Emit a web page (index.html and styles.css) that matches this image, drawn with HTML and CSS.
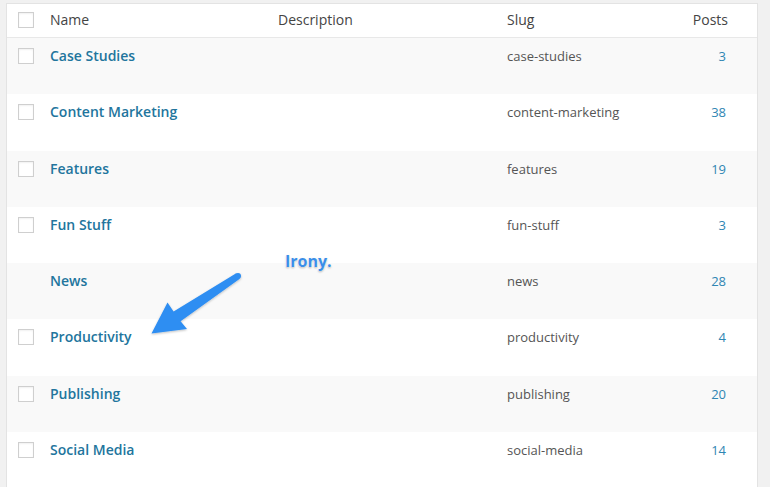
FILE: index.html
```html
<!DOCTYPE html>
<html>
<head>
<meta charset="utf-8">
<link rel="stylesheet" href="styles.css">
</head>
<body>
<div class="panel">
  <div class="row head">
    <div class="cb"><span class="box"></span></div>
    <div class="cell">Name</div>
    <div class="cell">Description</div>
    <div class="cell">Slug</div>
    <div class="cell num">Posts</div>
  </div>
  <div class="row alt">
    <div class="cb"><span class="box"></span></div>
    <div class="cell name">Case Studies</div>
    <div class="cell"></div>
    <div class="cell slug">case-studies</div>
    <div class="cell num count">3</div>
  </div>
  <div class="row">
    <div class="cb"><span class="box"></span></div>
    <div class="cell name">Content Marketing</div>
    <div class="cell"></div>
    <div class="cell slug">content-marketing</div>
    <div class="cell num count">38</div>
  </div>
  <div class="row alt">
    <div class="cb"><span class="box"></span></div>
    <div class="cell name">Features</div>
    <div class="cell"></div>
    <div class="cell slug">features</div>
    <div class="cell num count">19</div>
  </div>
  <div class="row">
    <div class="cb"><span class="box"></span></div>
    <div class="cell name">Fun Stuff</div>
    <div class="cell"></div>
    <div class="cell slug">fun-stuff</div>
    <div class="cell num count">3</div>
  </div>
  <div class="row alt">
    <div class="cb"></div>
    <div class="cell name">News</div>
    <div class="cell"></div>
    <div class="cell slug">news</div>
    <div class="cell num count">28</div>
  </div>
  <div class="row">
    <div class="cb"><span class="box"></span></div>
    <div class="cell name">Productivity</div>
    <div class="cell"></div>
    <div class="cell slug">productivity</div>
    <div class="cell num count">4</div>
  </div>
  <div class="row alt">
    <div class="cb"><span class="box"></span></div>
    <div class="cell name">Publishing</div>
    <div class="cell"></div>
    <div class="cell slug">publishing</div>
    <div class="cell num count">20</div>
  </div>
  <div class="row">
    <div class="cb"><span class="box"></span></div>
    <div class="cell name">Social Media</div>
    <div class="cell"></div>
    <div class="cell slug">social-media</div>
    <div class="cell num count">14</div>
  </div>
</div>
<div class="irony">Irony.</div>
<svg class="arrow" width="770" height="487" viewBox="0 0 770 487">
  <defs>
    <filter id="sh" x="-20%" y="-20%" width="140%" height="140%">
      <feDropShadow dx="0" dy="1" stdDeviation="1.2" flood-color="#000" flood-opacity="0.25"/>
    </filter>
  </defs>
  <g filter="url(#sh)" fill="#2e8ef2">
    <polygon points="236.2,273.3 173.6,311.5 167.5,302.5 151.5,333.5 187,329 180.6,321.2 239.8,278.7"/>
    <circle cx="238" cy="276" r="3"/>
  </g>
</svg>
</body>
</html>
```
FILE: styles.css
```css
html, body {
  margin: 0;
  padding: 0;
  background: #f1f1f1;
  font-family: "Open Sans", "Liberation Sans", sans-serif;
  overflow: hidden;
}
body {
  width: 770px;
  height: 487px;
  position: relative;
}
.panel {
  margin: 3px 0 0 6px;
  width: 750px;
  background: #fff;
  border: 1px solid #e3e3e3;
  border-bottom: none;
}
.row {
  display: grid;
  grid-template-columns: 43px 228px 229px 143px 78px;
  padding-right: 29px;
  height: 56.25px;
  background: #fff;
}
.row.alt {
  background: #f9f9f9;
}
.row.head {
  height: 33px;
  border-bottom: 1px solid #e8e8e8;
}
.cb {
  padding: 10px 0 0 11px;
}
.head .cb {
  padding-top: 8px;
}
.box {
  display: block;
  width: 14px;
  height: 14px;
  border: 1px solid #cfcfcf;
  background: #fff;
  box-shadow: inset 0 1px 2px rgba(0,0,0,0.06);
}
.cell {
  padding-top: 8px;
  font-size: 14px;
  line-height: 20px;
  color: #555;
  white-space: nowrap;
}
.head .cell {
  padding-top: 6px;
  color: #444;
}
.num {
  text-align: right;
}
.name {
  color: #22759d;
  font-weight: 600;
}
.slug {
  font-size: 13px;
  color: #555;
}
.count {
  font-size: 13px;
  color: #2f86b3;
  padding-right: 2px;
}
.irony {
  position: absolute;
  left: 285px;
  top: 250px;
  font-size: 16px;
  font-weight: 700;
  color: #3a8ee8;
  text-shadow: 0 0 1px #fff, 0 0 2px #fff, 0 1px 2px rgba(0,0,0,0.35);
}
.arrow {
  position: absolute;
  left: 0;
  top: 0;
  pointer-events: none;
}
```
